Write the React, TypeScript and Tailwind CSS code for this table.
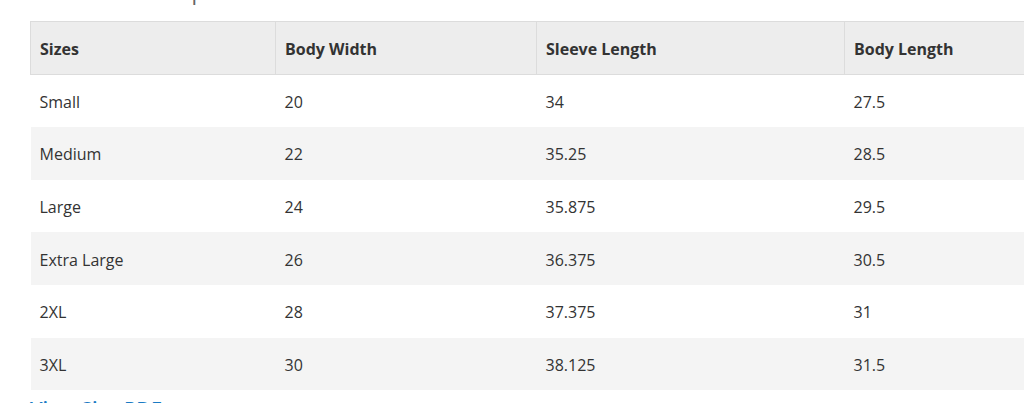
const rows = [
  ["Small", "20", "34", "27.5"],
  ["Medium", "22", "35.25", "28.5"],
  ["Large", "24", "35.875", "29.5"],
  ["Extra Large", "26", "36.375", "30.5"],
  ["2XL", "28", "37.375", "31"],
  ["3XL", "30", "38.125", "31.5"],
]

const headers = ["Sizes", "Body Width", "Sleeve Length", "Body Length"]
const widths = ["w-[245px]", "w-[261px]", "w-[308px]", "w-[300px]"]

export default function App() {
  return (
    <div className="h-[403px] w-[1024px] overflow-hidden bg-white font-['Open_Sans',sans-serif] text-[#333]">
      <div className="pl-[30px]">
        {/* Section title, scrolled mostly out of view */}
        <h2 className="-mt-[23px] h-[44px] text-[22px] leading-[28px] text-[#666]">Measurement Specs</h2>

        {/* Size chart */}
        <table className="w-[1114px] table-fixed border-collapse text-[16px]">
          <thead>
            <tr className="h-[53px] bg-[#ededed]">
              {headers.map((h, i) => (
                <th
                  key={h}
                  className={`${widths[i]} border border-[#dcdcdc] px-[9px] pt-[2px] text-left font-bold`}
                >
                  {h}
                </th>
              ))}
            </tr>
          </thead>
          <tbody>
            {rows.map((r, i) => (
              <tr key={r[0]} className={`h-[52.67px] ${i % 2 === 1 ? "bg-[#f4f4f4]" : "bg-white"}`}>
                {r.map((c, j) => (
                  <td key={j} className="px-[9px] pt-[2px] text-left">
                    {c}
                  </td>
                ))}
              </tr>
            ))}
          </tbody>
        </table>

        <a href="#" className="mt-[5px] block text-[20px] leading-[28px] font-semibold text-[#1a7bc4]">
          View Size PDF
        </a>
      </div>
    </div>
  )
}
